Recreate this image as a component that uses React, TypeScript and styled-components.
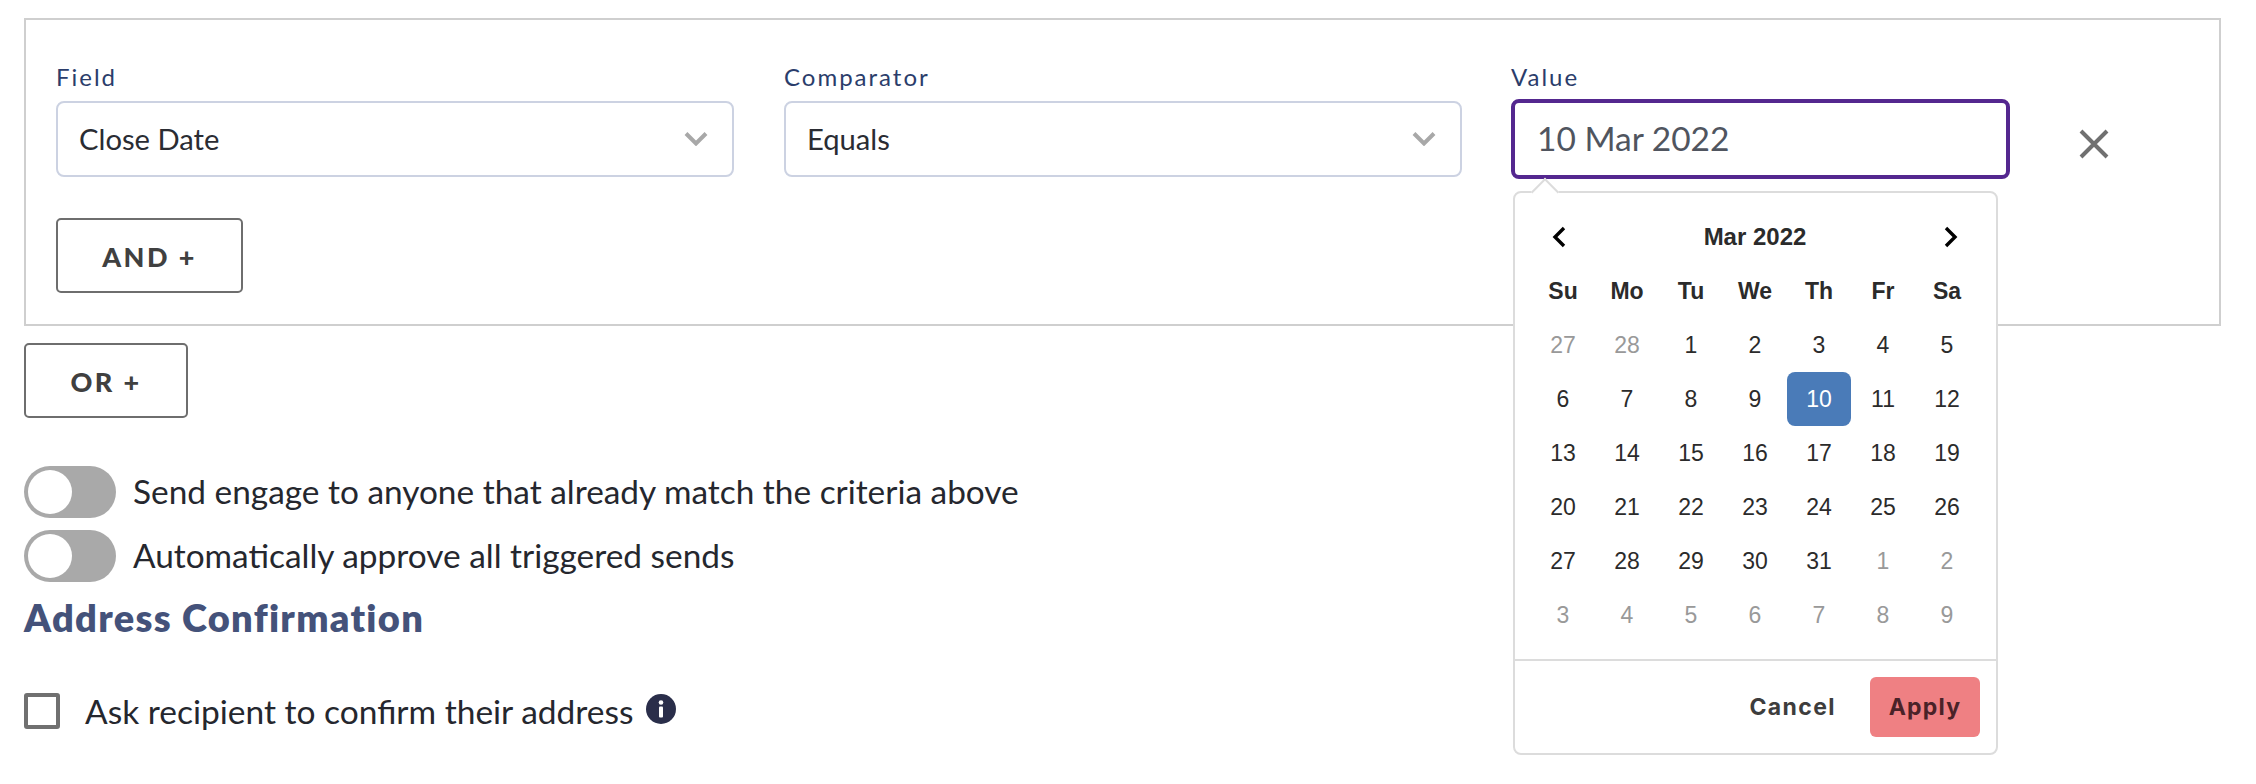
import styled, { createGlobalStyle } from "styled-components";

const GlobalStyle = createGlobalStyle`
  html, body {
    margin: 0;
    background: #fff;
    font-family: "Lato", "Liberation Sans", sans-serif;
  }
  * {
    box-sizing: border-box;
  }
`;

const weeks: { label: string; muted?: boolean; selected?: boolean }[][] = [
  [
    { label: "27", muted: true },
    { label: "28", muted: true },
    { label: "1" },
    { label: "2" },
    { label: "3" },
    { label: "4" },
    { label: "5" },
  ],
  [
    { label: "6" },
    { label: "7" },
    { label: "8" },
    { label: "9" },
    { label: "10", selected: true },
    { label: "11" },
    { label: "12" },
  ],
  ["13", "14", "15", "16", "17", "18", "19"].map((label) => ({ label })),
  ["20", "21", "22", "23", "24", "25", "26"].map((label) => ({ label })),
  [
    { label: "27" },
    { label: "28" },
    { label: "29" },
    { label: "30" },
    { label: "31" },
    { label: "1", muted: true },
    { label: "2", muted: true },
  ],
  ["3", "4", "5", "6", "7", "8", "9"].map((label) => ({ label, muted: true })),
];

const dayNames = ["Su", "Mo", "Tu", "We", "Th", "Fr", "Sa"];

const Chevron = () => (
  <ChevronIcon viewBox="0 0 24 15" fill="none">
    <path d="M2 2.5 12 12.5 22 2.5" stroke="#a8a8a8" strokeWidth="4" />
  </ChevronIcon>
);

const Arrow = ({ left }: { left?: boolean }) => (
  <svg width="16" height="22" viewBox="0 0 16 22" fill="none">
    <path
      d={left ? "M13 2 4 11 13 20" : "M3 2 12 11 3 20"}
      stroke="#000"
      strokeWidth="3.4"
    />
  </svg>
);

const Select = ({ value }: { value: string }) => (
  <SelectBox>
    <span>{value}</span>
    <Chevron />
  </SelectBox>
);

const Toggle = ({ label }: { label: string }) => (
  <ToggleRow>
    <ToggleTrack>
      <ToggleKnob />
    </ToggleTrack>
    <span>{label}</span>
  </ToggleRow>
);

const App = () => {
  return (
    <Page>
      <GlobalStyle />
      <FilterPanel>
        <FieldRow>
          <FieldColumn $width={678} $gap={50}>
            <FieldLabel>Field</FieldLabel>
            <ControlSlot>
              <Select value="Close Date" />
            </ControlSlot>
          </FieldColumn>
          <FieldColumn $width={678} $gap={49}>
            <FieldLabel>Comparator</FieldLabel>
            <ControlSlot>
              <Select value="Equals" />
            </ControlSlot>
          </FieldColumn>
          <FieldColumn $width={499} $gap={69}>
            <FieldLabel>Value</FieldLabel>
            <ControlSlot>
              <DateInput>10 Mar 2022</DateInput>
            </ControlSlot>
            <Popover>
              <PopoverArrow />
              <Calendar>
                <MonthHeader>
                  <Arrow left />
                  <span>Mar 2022</span>
                  <Arrow />
                </MonthHeader>
                <DayGrid>
                  {dayNames.map((name) => (
                    <DayName key={name}>{name}</DayName>
                  ))}
                  {weeks.flat().map((day, i) => (
                    <DayCell key={i} $muted={day.muted} $selected={day.selected}>
                      {day.label}
                    </DayCell>
                  ))}
                </DayGrid>
              </Calendar>
              <PopoverFooter>
                <CancelButton>Cancel</CancelButton>
                <ApplyButton>Apply</ApplyButton>
              </PopoverFooter>
            </Popover>
          </FieldColumn>
          <RemoveIcon viewBox="0 0 30 30" fill="none">
            <path d="M2 2 28 28M28 2 2 28" stroke="#707070" strokeWidth="4" />
          </RemoveIcon>
        </FieldRow>
        <AndButton>AND +</AndButton>
      </FilterPanel>
      <OrButton>OR +</OrButton>
      <ToggleList>
        <Toggle label="Send engage to anyone that already match the criteria above" />
        <Toggle label="Automatically approve all triggered sends" />
      </ToggleList>
      <SectionTitle>Address Confirmation</SectionTitle>
      <CheckRow>
        <CheckBox />
        <CheckLabel>Ask recipient to confirm their address</CheckLabel>
        <InfoIcon viewBox="0 0 30 30">
          <circle cx="15" cy="15" r="15" fill="#2a2e4a" />
          <circle cx="15" cy="8.5" r="2.3" fill="#fff" />
          <rect x="13" y="12.5" width="4" height="11" rx="1" fill="#fff" />
        </InfoIcon>
      </CheckRow>
    </Page>
  );
};

export default App;

const Page = styled.div`
  width: 2256px;
  height: 784px;
  padding: 18px 0 0 24px;
  overflow: hidden;
  color: #25272e;
`;

const FilterPanel = styled.div`
  width: 2197px;
  height: 308px;
  border: 2px solid #cfcfcf;
  padding: 43px 30px 0;
`;

const FieldRow = styled.div`
  display: flex;
  align-items: flex-start;
`;

const FieldColumn = styled.div<{ $width: number; $gap: number }>`
  position: relative;
  width: ${(p) => p.$width}px;
  margin-right: ${(p) => p.$gap}px;
  flex: none;
`;

const FieldLabel = styled.div`
  height: 36px;
  font-size: 24px;
  line-height: 28px;
  letter-spacing: 2px;
  color: #2b3d6b;
`;

const ControlSlot = styled.div`
  height: 80px;
  display: flex;
  align-items: center;
`;

const SelectBox = styled.div`
  width: 100%;
  height: 76px;
  border: 2px solid #ccd2e2;
  border-radius: 8px;
  padding: 0 24px 2px 21px;
  display: flex;
  align-items: center;
  justify-content: space-between;
  font-size: 29.2px;
  color: #2a2c33;
`;

const ChevronIcon = styled.svg`
  width: 24px;
  height: 15px;
`;

const DateInput = styled.div`
  width: 100%;
  height: 80px;
  border: 4px solid #54278f;
  border-radius: 8px;
  padding: 0 0 2px 22px;
  display: flex;
  align-items: center;
  font-size: 33.5px;
  color: #50555f;
`;

const Popover = styled.div`
  position: absolute;
  top: 128px;
  left: 2px;
  z-index: 2;
  width: 485px;
  height: 564px;
  background: #fff;
  border: 2px solid #dcdcdc;
  border-radius: 8px;
`;

const PopoverArrow = styled.div`
  position: absolute;
  top: -11px;
  left: 20px;
  width: 20px;
  height: 20px;
  background: #fff;
  border-top: 2px solid #dcdcdc;
  border-left: 2px solid #dcdcdc;
  transform: rotate(45deg);
`;

const Calendar = styled.div`
  height: 468px;
  padding: 17px 17px 0 16px;
  border-bottom: 2px solid #dcdcdc;
  font-family: "Liberation Sans", Arial, sans-serif;
`;

const MonthHeader = styled.div`
  height: 54px;
  padding: 0 20px;
  display: flex;
  align-items: center;
  justify-content: space-between;
  font-size: 24px;
  font-weight: 700;
  color: #2b2b2b;
`;

const DayGrid = styled.div`
  display: grid;
  grid-template-columns: repeat(7, 64px);
  grid-auto-rows: 54px;
`;

const DayName = styled.div`
  display: flex;
  align-items: center;
  justify-content: center;
  font-size: 23px;
  font-weight: 700;
  color: #2b2b2b;
`;

const DayCell = styled.div<{ $muted?: boolean; $selected?: boolean }>`
  display: flex;
  align-items: center;
  justify-content: center;
  font-size: 23px;
  border-radius: 8px;
  color: ${(p) => (p.$selected ? "#fff" : p.$muted ? "#999" : "#2b2b2b")};
  background: ${(p) => (p.$selected ? "#4a7bb8" : "transparent")};
`;

const PopoverFooter = styled.div`
  padding: 16px 16px 0 0;
  display: flex;
  align-items: center;
  justify-content: flex-end;
  gap: 34px;
  font-family: "Inter", "Liberation Sans", sans-serif;
  font-size: 23px;
  font-weight: 700;
`;

const CancelButton = styled.div`
  color: #3d3d3d;
  letter-spacing: 1.4px;
`;

const ApplyButton = styled.div`
  width: 110px;
  height: 60px;
  border-radius: 6px;
  background: #ef8083;
  color: #4a2228;
  letter-spacing: 1.2px;
  display: flex;
  align-items: center;
  justify-content: center;
`;

const RemoveIcon = styled.svg`
  width: 30px;
  height: 30px;
  margin-top: 66px;
  flex: none;
`;

const OutlineButton = styled.div`
  height: 75px;
  border: 2px solid #6e6e6e;
  border-radius: 5px;
  padding-top: 2px;
  display: flex;
  align-items: center;
  justify-content: center;
  font-family: "Lato", "Liberation Sans", sans-serif;
  font-size: 27px;
  font-weight: 900;
  letter-spacing: 2.4px;
  color: #404040;
`;

const AndButton = styled(OutlineButton)`
  width: 187px;
  margin-top: 39px;
`;

const OrButton = styled(OutlineButton)`
  width: 164px;
  margin-top: 17px;
`;

const ToggleList = styled.div`
  margin-top: 48px;
  display: flex;
  flex-direction: column;
  gap: 12px;
`;

const ToggleRow = styled.div`
  height: 52px;
  display: flex;
  align-items: center;
  gap: 17px;
  padding-bottom: 2px;
  font-size: 33.4px;
  color: #25272e;
`;

const ToggleTrack = styled.div`
  width: 92px;
  height: 52px;
  margin-bottom: -2px;
  border-radius: 26px;
  background: #a9a9a9;
  padding: 4px;
  flex: none;
`;

const ToggleKnob = styled.div`
  width: 44px;
  height: 44px;
  border-radius: 50%;
  background: #fff;
`;

const SectionTitle = styled.h2`
  margin: 13px 0 0;
  height: 44px;
  font-size: 38px;
  line-height: 44px;
  font-weight: 800;
  letter-spacing: 1.3px;
  color: #44527a;
`;

const CheckRow = styled.div`
  margin-top: 54px;
  display: flex;
  align-items: center;
  height: 36px;
`;

const CheckBox = styled.div`
  width: 36px;
  height: 36px;
  border: 4px solid #707070;
  border-radius: 3px;
  flex: none;
`;

const CheckLabel = styled.span`
  margin-left: 25px;
  font-size: 33.5px;
  color: #25272e;
`;

const InfoIcon = styled.svg`
  width: 30px;
  height: 30px;
  margin: -4px 0 0 12px;
`;
